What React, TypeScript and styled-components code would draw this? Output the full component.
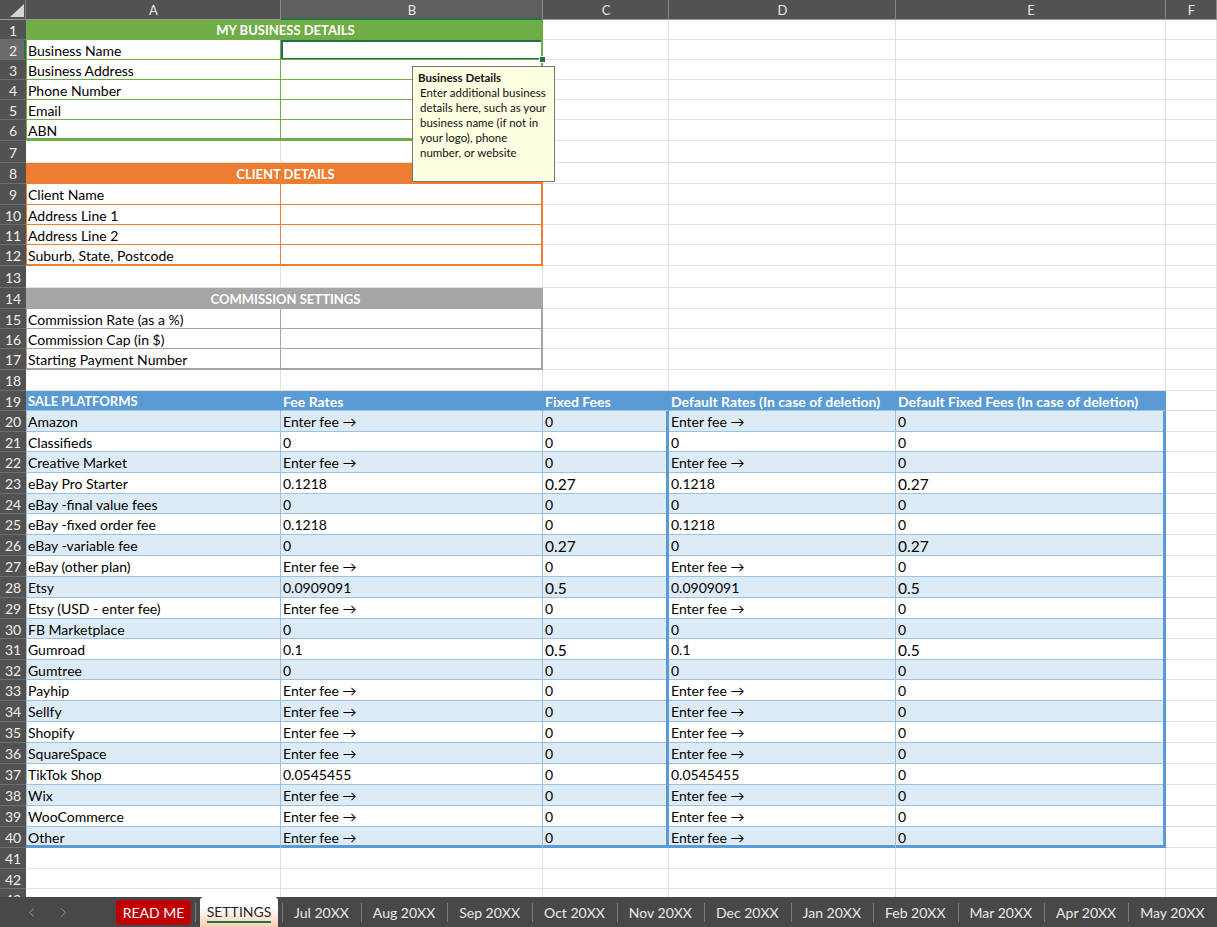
import React from "react";
import styled, { createGlobalStyle } from "styled-components";
import { ChevronLeft, ChevronRight } from "lucide-react";

const GlobalStyle = createGlobalStyle`
  html, body {
    margin: 0;
    padding: 0;
    background: #ffffff;
  }
  body {
    font-family: Lato, "Noto Sans", sans-serif;
    overflow: hidden;
  }
`;

const GRID = "#e1e1e1";
const GREEN = "#70ad47";
const ORANGE = "#ed7d31";
const GREY = "#a5a5a5";
const BLUE = "#5b9bd5";
const BLUE_LINE = "#9bc2e6";
const BLUE_BAND = "#ddebf7";
const SELECT = "#217346";

const COLS = [255, 262, 126, 227, 270];
const LETTERS = ["A", "B", "C", "D", "E"];

const ROW_HEIGHTS = [
  20, 20, 20, 20, 20, 21, 22, 21, 21, 20, 20, 21, 22, 21, 20, 20, 21, 21, 20,
  21, 20, 21, 21, 20, 21, 21, 21, 21, 21, 20, 21, 20, 21, 21, 21, 21, 21, 21,
  21, 21, 21, 20, 20,
];

interface Edge {
  w: number;
  c: string;
}

interface CellSpec {
  w?: number;
  text?: string;
  bg?: string;
  color?: string;
  bold?: boolean;
  caps?: boolean;
  center?: boolean;
  big?: boolean;
  r?: Edge;
  b?: Edge;
  l?: Edge;
  sel?: boolean;
}

const Sheet = styled.div`
  width: 1217px;
  height: 927px;
  display: flex;
  flex-direction: column;
  overflow: hidden;
  background: #ffffff;
`;

const HeaderBar = styled.div`
  display: flex;
  height: 20px;
  flex-shrink: 0;
  background: #525252;
  box-shadow: inset 0 -1px 0 #9a9a9a;
`;

const Corner = styled.div`
  width: 26px;
  flex-shrink: 0;
  display: flex;
  align-items: flex-end;
  justify-content: flex-end;
  padding: 0 2px 3px 0;
  box-sizing: border-box;
  box-shadow: inset -1px 0 0 #7a7a7a;
`;

const ColLetter = styled.div<{ $w?: number; $active?: boolean }>`
  width: ${(p) => (p.$w ? `${p.$w}px` : "auto")};
  flex: ${(p) => (p.$w ? "0 0 auto" : "1")};
  display: flex;
  align-items: center;
  justify-content: center;
  font-size: 13px;
  color: #e8e8e8;
  background: ${(p) => (p.$active ? "#5f5f5f" : "transparent")};
  box-shadow: inset -1px 0 0 #8a8a8a
    ${(p) => (p.$active ? `, inset 0 -2px 0 ${SELECT}` : "")};
`;

const Body = styled.div`
  position: relative;
  flex: 1;
  overflow: hidden;
`;

const Row = styled.div<{ $h: number }>`
  display: flex;
  height: ${(p) => p.$h}px;
`;

const RowNum = styled.div<{ $active?: boolean }>`
  width: 26px;
  flex-shrink: 0;
  display: flex;
  align-items: center;
  justify-content: center;
  font-size: 14px;
  color: #eeeeee;
  background: ${(p) => (p.$active ? "#6a6a6a" : "#525252")};
  box-shadow: inset 0 -1px 0 #6e6e6e
    ${(p) => (p.$active ? `, inset -2px 0 0 ${SELECT}` : "")};
`;

const Cell = styled.div<{
  $w?: number;
  $bg?: string;
  $color?: string;
  $bold?: boolean;
  $caps?: boolean;
  $center?: boolean;
  $big?: boolean;
  $edges: string;
  $sel?: boolean;
}>`
  position: relative;
  width: ${(p) => (p.$w ? `${p.$w}px` : "auto")};
  flex: ${(p) => (p.$w ? "0 0 auto" : "1")};
  display: flex;
  align-items: center;
  justify-content: ${(p) => (p.$center ? "center" : "flex-start")};
  padding: 0 0 0 2px;
  box-sizing: border-box;
  white-space: nowrap;
  overflow: visible;
  font-size: ${(p) => (p.$big ? "15.5px" : p.$caps ? "13px" : "14px")};
  font-weight: ${(p) => (p.$bold ? 700 : 400)};
  color: ${(p) => p.$color || "#000000"};
  background: ${(p) => p.$bg || "transparent"};
  box-shadow: ${(p) => p.$edges}
    ${(p) => (p.$sel ? `, inset 0 0 0 2px ${SELECT}` : "")};
  z-index: ${(p) => (p.$sel ? 2 : "auto")};

  ${(p) =>
    p.$sel &&
    `
    &::after {
      content: "";
      position: absolute;
      right: -3px;
      bottom: -3px;
      width: 5px;
      height: 5px;
      background: ${SELECT};
      border: 1px solid #ffffff;
    }
  `}
`;

const Note = styled.div`
  position: absolute;
  left: 412px;
  top: 46px;
  width: 143px;
  height: 116px;
  box-sizing: border-box;
  padding: 3px 4px 0 5px;
  background: #ffffe1;
  border: 1px solid #767676;
  font-size: 11.5px;
  line-height: 15px;
  color: #111111;
  z-index: 5;
`;

const NoteTitle = styled.div`
  font-weight: 700;
`;

const NoteLine = styled.div`
  padding-left: 2px;
  white-space: nowrap;
`;

const TabBar = styled.div`
  display: flex;
  align-items: stretch;
  height: 30px;
  flex-shrink: 0;
  background: #484848;
  white-space: nowrap;
`;

const NavArea = styled.div`
  width: 116px;
  flex-shrink: 0;
  display: flex;
  align-items: center;
  padding-left: 24px;
  gap: 17px;
  box-sizing: border-box;
  color: #9a9a9a;
`;

const ReadMeTab = styled.div`
  width: 75px;
  height: 25px;
  margin-top: 3px;
  flex-shrink: 0;
  display: flex;
  align-items: center;
  justify-content: center;
  border-radius: 4px;
  background: #c00000;
  color: #ffffff;
  font-size: 14px;
`;

const ActiveTab = styled.div`
  width: 78px;
  flex-shrink: 0;
  display: flex;
  align-items: center;
  justify-content: center;
  border-radius: 4px 4px 0 0;
  background: linear-gradient(#ffffff 35%, #f9cfb0);
  color: #262626;
  font-size: 14px;
`;

const ActiveLabel = styled.span`
  padding-bottom: 1px;
  border-bottom: 2px solid ${SELECT};
  margin-top: 2px;
`;

const Sep = styled.div`
  width: 1px;
  margin: 6px 4px 5px;
  flex-shrink: 0;
  background: #7c7c7c;
`;

const MonthTab = styled.div`
  display: flex;
  align-items: center;
  padding: 0 8px 0 7px;
  color: #e8e8e8;
  font-size: 14px;
  flex-shrink: 0;
`;

const edgesOf = (s: CellSpec) => {
  const r = s.r ?? { w: 1, c: GRID };
  const b = s.b ?? { w: 1, c: GRID };
  const parts = [`inset -${r.w}px 0 0 ${r.c}`, `inset 0 -${b.w}px 0 ${b.c}`];
  if (s.l) parts.push(`inset ${s.l.w}px 0 0 ${s.l.c}`);
  return parts.join(", ");
};

const emptyFrom = (start: number): CellSpec[] => [
  ...COLS.slice(start).map((w) => ({ w })),
  {},
];

const sectionHeader = (text: string, color: string): CellSpec[] => [
  {
    w: COLS[0] + COLS[1],
    text,
    bg: color,
    color: "#ffffff",
    bold: true,
    caps: true,
    center: true,
    r: { w: 2, c: color },
    b: { w: 1, c: color },
  },
  ...emptyFrom(2),
];

const sectionRow = (
  label: string,
  color: string,
  last: boolean,
  lastWidth: number,
  sel = false
): CellSpec[] => {
  const b = last ? { w: lastWidth, c: color } : { w: 1, c: color };
  return [
    { w: COLS[0], text: label, l: { w: 1, c: color }, r: { w: 1, c: color }, b },
    { w: COLS[1], r: { w: 2, c: color }, b, sel },
    ...emptyFrom(2),
  ];
};

const blueHeader: CellSpec[] = [
  "SALE PLATFORMS",
  "Fee Rates",
  "Fixed Fees",
  "Default Rates (In case of deletion)",
  "Default Fixed Fees (In case of deletion)",
]
  .map(
    (text, i): CellSpec => ({
      w: COLS[i],
      text,
      bg: BLUE,
      color: "#ffffff",
      bold: true,
      caps: i === 0,
      r: { w: 1, c: BLUE },
      b: { w: 1, c: BLUE_LINE },
    })
  )
  .concat([{}]);

const FEE = "Enter fee →";

const PLATFORMS: [string, string, string][] = [
  ["Amazon", FEE, "0"],
  ["Classifieds", "0", "0"],
  ["Creative Market", FEE, "0"],
  ["eBay Pro Starter", "0.1218", "0.27"],
  ["eBay -final value fees", "0", "0"],
  ["eBay -fixed order fee", "0.1218", "0"],
  ["eBay -variable fee", "0", "0.27"],
  ["eBay (other plan)", FEE, "0"],
  ["Etsy", "0.0909091", "0.5"],
  ["Etsy (USD - enter fee)", FEE, "0"],
  ["FB Marketplace", "0", "0"],
  ["Gumroad", "0.1", "0.5"],
  ["Gumtree", "0", "0"],
  ["Payhip", FEE, "0"],
  ["Sellfy", FEE, "0"],
  ["Shopify", FEE, "0"],
  ["SquareSpace", FEE, "0"],
  ["TikTok Shop", "0.0545455", "0"],
  ["Wix", FEE, "0"],
  ["WooCommerce", FEE, "0"],
  ["Other", FEE, "0"],
];

const platformRow = (
  [name, rate, fixed]: [string, string, string],
  i: number
): CellSpec[] => {
  const bg = i % 2 === 0 ? BLUE_BAND : "#ffffff";
  const last = i === PLATFORMS.length - 1;
  const b = last ? { w: 3, c: BLUE } : { w: 1, c: BLUE_LINE };
  const thin = { w: 1, c: BLUE_LINE };
  const thick = { w: 3, c: BLUE };
  const big = fixed !== "0";
  return [
    { w: COLS[0], text: name, bg, l: thin, r: thin, b },
    { w: COLS[1], text: rate, bg, r: thin, b },
    { w: COLS[2], text: fixed, bg, r: thick, b, big },
    { w: COLS[3], text: rate, bg, r: thin, b },
    { w: COLS[4], text: fixed, bg, r: thick, b, big },
    {},
  ];
};

const buildRows = (): CellSpec[][] => {
  const rows: CellSpec[][] = [];
  rows.push(sectionHeader("MY BUSINESS DETAILS", GREEN));
  ["Business Name", "Business Address", "Phone Number", "Email", "ABN"].forEach(
    (label, i, all) =>
      rows.push(sectionRow(label, GREEN, i === all.length - 1, 3, i === 0))
  );
  rows.push(emptyFrom(0));
  rows.push(sectionHeader("CLIENT DETAILS", ORANGE));
  ["Client Name", "Address Line 1", "Address Line 2", "Suburb, State, Postcode"].forEach(
    (label, i, all) => rows.push(sectionRow(label, ORANGE, i === all.length - 1, 2))
  );
  rows.push(emptyFrom(0));
  rows.push(sectionHeader("COMMISSION SETTINGS", GREY));
  [
    "Commission Rate (as a %)",
    "Commission Cap (in $)",
    "Starting Payment Number",
  ].forEach((label, i, all) =>
    rows.push(sectionRow(label, GREY, i === all.length - 1, 2))
  );
  rows.push(emptyFrom(0));
  rows.push(blueHeader);
  PLATFORMS.forEach((p, i) => rows.push(platformRow(p, i)));
  rows.push(emptyFrom(0), emptyFrom(0), emptyFrom(0));
  return rows;
};

const MONTHS = [
  "Jul 20XX",
  "Aug 20XX",
  "Sep 20XX",
  "Oct 20XX",
  "Nov 20XX",
  "Dec 20XX",
  "Jan 20XX",
  "Feb 20XX",
  "Mar 20XX",
  "Apr 20XX",
  "May 20XX",
];

function App() {
  const rows = buildRows();

  return (
    <Sheet>
      <GlobalStyle />
      <HeaderBar>
        <Corner>
          <svg width="14" height="13" viewBox="0 0 14 13">
            <polygon points="14,0 14,13 0,13" fill="#d4d4d4" />
          </svg>
        </Corner>
        {COLS.map((w, i) => (
          <ColLetter key={LETTERS[i]} $w={w} $active={i === 1}>
            {LETTERS[i]}
          </ColLetter>
        ))}
        <ColLetter>F</ColLetter>
      </HeaderBar>

      <Body>
        {rows.map((cells, r) => (
          <Row key={r} $h={ROW_HEIGHTS[r]}>
            <RowNum $active={r === 1}>{r + 1}</RowNum>
            {cells.map((c, i) => (
              <Cell
                key={i}
                $w={c.w}
                $bg={c.bg}
                $color={c.color}
                $bold={c.bold}
                $caps={c.caps}
                $center={c.center}
                $big={c.big}
                $edges={edgesOf(c)}
                $sel={c.sel}
              >
                {c.text}
              </Cell>
            ))}
          </Row>
        ))}
        <Note>
          <NoteTitle>Business Details</NoteTitle>
          <NoteLine>Enter additional business</NoteLine>
          <NoteLine>details here, such as your</NoteLine>
          <NoteLine>business name (if not in</NoteLine>
          <NoteLine>your logo), phone</NoteLine>
          <NoteLine>number, or website</NoteLine>
        </Note>
      </Body>

      <TabBar>
        <NavArea>
          <ChevronLeft size={15} strokeWidth={1.5} />
          <ChevronRight size={15} strokeWidth={1.5} />
        </NavArea>
        <ReadMeTab>READ ME</ReadMeTab>
        <Sep />
        <ActiveTab>
          <ActiveLabel>SETTINGS</ActiveLabel>
        </ActiveTab>
        <Sep />
        {MONTHS.map((m) => (
          <React.Fragment key={m}>
            <MonthTab>{m}</MonthTab>
            <Sep />
          </React.Fragment>
        ))}
      </TabBar>
    </Sheet>
  );
}

export default App;
